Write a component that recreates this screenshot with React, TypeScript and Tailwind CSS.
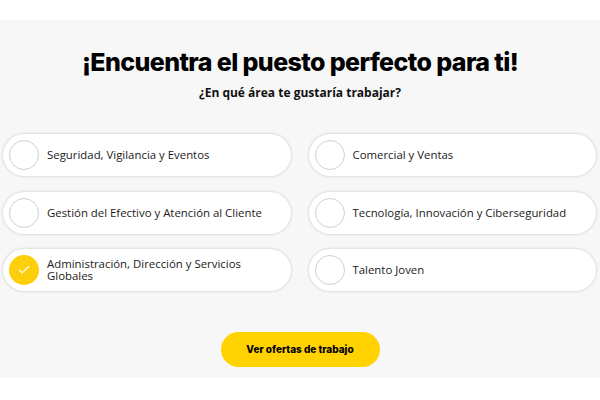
import { Check } from "lucide-react";

const areas = [
  { id: "seguridad", label: "Seguridad, Vigilancia y Eventos", checked: false },
  { id: "comercial", label: "Comercial y Ventas", checked: false },
  { id: "efectivo", label: "Gestión del Efectivo y Atención al Cliente", checked: false },
  { id: "tecnologia", label: "Tecnología, Innovación y Ciberseguridad", checked: false },
  { id: "admin", label: "Administración, Dirección y Servicios Globales", checked: true },
  { id: "talento", label: "Talento Joven", checked: false },
];

export default function App() {
  return (
    <div className="w-[600px] h-[400px] bg-white overflow-hidden">
      <section className="mt-5 h-[358px] bg-[#f7f7f7] px-[3px] pt-[27px]">
        {/* Title */}
        <h1
          className="text-center text-[25px] leading-[30px] font-extrabold tracking-[-0.6px] text-black"
          style={{ fontFamily: "Inter, 'Liberation Sans', sans-serif" }}
        >
          ¡Encuentra el puesto perfecto para ti!
        </h1>
        <p
          className="mt-[8px] text-center text-[12px] leading-4 font-bold text-[#111]"
          style={{ fontFamily: "'Open Sans', sans-serif" }}
        >
          ¿En qué área te gustaría trabajar?
        </p>

        {/* Options */}
        <div className="mt-[33px] grid grid-cols-2 gap-x-[18px] gap-y-[15.5px] pr-[1px]">
          {areas.map((a) => (
            <label
              key={a.id}
              className="h-[42px] flex items-center gap-2 pl-[6px] pr-4 rounded-full bg-white shadow-[0_0_3px_rgba(0,0,0,0.22)] cursor-pointer"
            >
              <span
                className={`shrink-0 w-[30px] h-[30px] rounded-full grid place-items-center ${
                  a.checked ? "bg-[#fccf0a]" : "bg-white border border-[#cfcfcf]"
                }`}
              >
                {a.checked && <Check className="w-3.5 h-3.5 text-white" strokeWidth={2} />}
              </span>
              <span
                className="text-[11.4px] leading-[12px] text-[#1a1a1a]"
                style={{ fontFamily: "'Open Sans', sans-serif" }}
              >
                {a.label}
              </span>
            </label>
          ))}
        </div>

        {/* CTA */}
        <div className="mt-[41px] flex justify-center">
          <button
            className="w-[159px] h-[35px] rounded-full bg-[#ffd200] text-[10px] font-extrabold text-black"
            style={{ fontFamily: "Inter, 'Liberation Sans', sans-serif" }}
          >
            Ver ofertas de trabajo
          </button>
        </div>
      </section>
    </div>
  );
}
